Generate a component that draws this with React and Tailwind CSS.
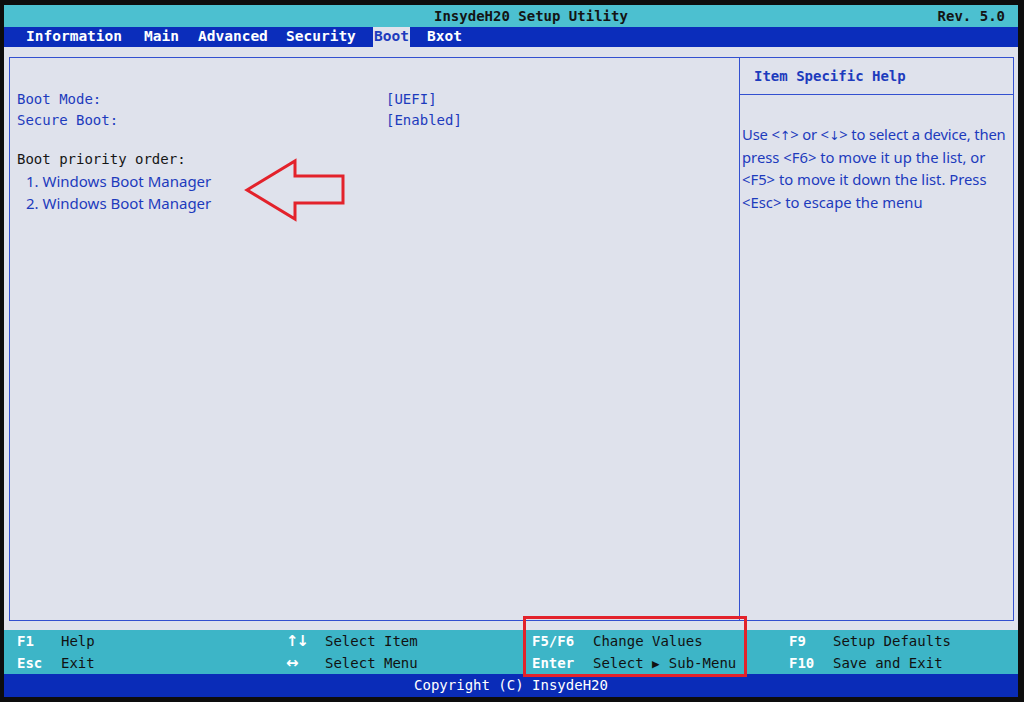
import React from "react";

const mono = "font-['DejaVu_Sans_Mono',monospace]";
const sans = "font-['Noto_Sans',sans-serif]";
const arrowFont = "font-['DejaVu_Sans',sans-serif]";

const tabs = [
  { name: "Information", slot: "w-[118px]" },
  { name: "Main", slot: "w-[54px]" },
  { name: "Advanced", slot: "w-[88px]" },
  { name: "Security", slot: "w-[87px]" },
  { name: "Boot", slot: "w-[54px]", active: true },
  { name: "Bxot", slot: "w-[54px]" },
];

function KeyRow({ k, label, keyW, glyph }) {
  return (
    <div className="flex h-[22px] items-center">
      <span
        className={
          glyph
            ? `${arrowFont} text-[15px] font-bold text-white tracking-[-2px]`
            : "font-bold text-white"
        }
        style={{ width: keyW }}
      >
        {k}
      </span>
      <span className="text-[#111]">{label}</span>
    </div>
  );
}

const Arrow = ({ children }) => (
  <span className={`${arrowFont} text-[12.5px] leading-none`}>{children}</span>
);

export default function App() {
  return (
    <div className={`relative w-[1024px] h-[702px] bg-[#0d0d0d] pl-[4px] pr-[6px] pt-[5px] pb-[5px] overflow-hidden ${mono}`}>
      <div className="flex h-full flex-col">
        {/* title bar */}
        <div className="flex h-[22px] items-center bg-[#4cc0d0] text-[14px] text-[#141414] font-bold">
          <span className="pl-[430px]">InsydeH20 Setup Utility</span>
          <span className="ml-auto pr-[13px]">Rev. 5.0</span>
        </div>

        {/* menu tabs */}
        <div className="flex h-[20px] items-stretch bg-[#0b2dbb] pl-[22px] text-[14.5px] font-bold">
          {tabs.map((t) => (
            <div key={t.name} className={`flex items-stretch ${t.slot}`}>
              <span
                className={
                  t.active
                    ? "flex items-center bg-[#dfe2ec] px-[1px] text-[#1d3bbd]"
                    : "flex items-center text-white"
                }
              >
                {t.name}
              </span>
            </div>
          ))}
        </div>

        {/* main panel */}
        <div className="flex-1 bg-[#dfe2ec] pl-[5px] pr-[4px] pt-[10px] pb-[9px]">
          <div className="flex h-full border-[1.5px] border-[#3350d0]">
            <div className="w-[730px] border-r-[1.5px] border-[#3350d0] pl-[7px] pt-[31px] text-[#1d3bbd]">
              <div className="flex h-[21px] items-center text-[14px]">
                <span className="w-[369px]">Boot Mode:</span>
                <span>[UEFI]</span>
              </div>
              <div className="flex h-[21px] items-center text-[14px]">
                <span className="w-[369px]">Secure Boot:</span>
                <span>[Enabled]</span>
              </div>
              <div className="mt-[18px] flex h-[21px] items-center text-[14px] text-[#161616]">
                Boot priority order:
              </div>
              <div className={`flex h-[22px] items-center pl-[9px] text-[15px] ${sans}`}>
                1. Windows Boot Manager
              </div>
              <div className={`flex h-[22px] items-center pl-[9px] text-[15px] ${sans}`}>
                2. Windows Boot Manager
              </div>
            </div>
            <div className="flex flex-1 flex-col text-[#1d3bbd]">
              <div className="flex h-[37px] items-center border-b-[1.5px] border-[#3350d0] pl-[14px] text-[14px] font-bold">
                Item Specific Help
              </div>
              <div className={`pl-[2px] pt-[28px] text-[14.8px] leading-[22.6px] ${sans}`}>
                <div className="h-[22.6px] whitespace-nowrap tracking-[-0.15px]">
                  Use &lt;<Arrow>↑</Arrow>&gt; or &lt;<Arrow>↓</Arrow>&gt; to select a device, then
                </div>
                <div>press &lt;F6&gt; to move it up the list, or</div>
                <div>&lt;F5&gt; to move it down the list. Press</div>
                <div>&lt;Esc&gt; to escape the menu</div>
              </div>
            </div>
          </div>
        </div>

        {/* key legend */}
        <div className="flex h-[44px] bg-[#3db5c7] pl-[13px] text-[14px]">
          <div className="w-[269px]">
            <KeyRow k="F1" label="Help" keyW={44} />
            <KeyRow k="Esc" label="Exit" keyW={44} />
          </div>
          <div className="w-[246px]">
            <KeyRow k="↑↓" label="Select Item" keyW={39} glyph />
            <KeyRow k="↔" label="Select Menu" keyW={39} glyph />
          </div>
          <div className="w-[257px]">
            <KeyRow k="F5/F6" label="Change Values" keyW={61} />
            <KeyRow
              k="Enter"
              label={
                <>
                  Select <span className="inline-block w-[8.4px] text-[12.5px]">▶</span> Sub-Menu
                </>
              }
              keyW={61}
            />
          </div>
          <div>
            <KeyRow k="F9" label="Setup Defaults" keyW={44} />
            <KeyRow k="F10" label="Save and Exit" keyW={44} />
          </div>
        </div>

        {/* copyright */}
        <div className="flex h-[23px] items-center justify-center bg-[#0a2cb8] text-[14px] text-white">
          Copyright (C) InsydeH20
        </div>
      </div>

      {/* red annotation frame around the value keys */}
      <div className="absolute left-[523px] top-[616px] h-[61px] w-[224px] border-[3px] border-[#e3222b]" />

      {/* red annotation arrow pointing at the boot entries */}
      <svg className="absolute left-[240px] top-[155px]" width="110" height="70" viewBox="240 155 110 70">
        <path
          d="M247 190 L295 161 L295 176 L343 176 L343 203 L295 203 L295 219 Z"
          fill="none"
          stroke="#e3222b"
          strokeWidth="3"
          strokeLinejoin="miter"
        />
      </svg>
    </div>
  );
}
